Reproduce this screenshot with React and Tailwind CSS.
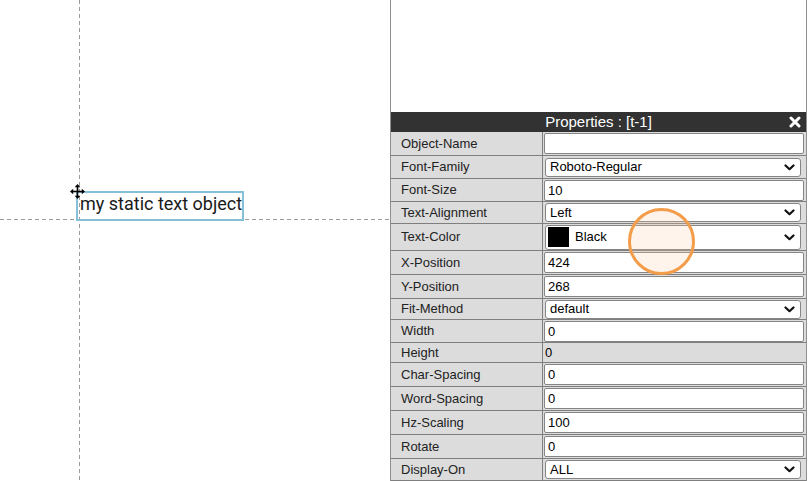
import React from "react";

const rows = [
  { label: "Object-Name", kind: "input", value: "", h: "h-[24px]" },
  { label: "Font-Family", kind: "select", value: "Roboto-Regular", h: "h-[23px]" },
  { label: "Font-Size", kind: "input", value: "10", h: "h-[23px]" },
  { label: "Text-Alignment", kind: "select", value: "Left", h: "h-[22px]" },
  { label: "Text-Color", kind: "color", value: "Black", h: "h-[27px]" },
  { label: "X-Position", kind: "input", value: "424", h: "h-[24px]" },
  { label: "Y-Position", kind: "input", value: "268", h: "h-[24px]" },
  { label: "Fit-Method", kind: "select", value: "default", h: "h-[21px]" },
  { label: "Width", kind: "input", value: "0", h: "h-[23px]" },
  { label: "Height", kind: "text", value: "0", h: "h-[20px]" },
  { label: "Char-Spacing", kind: "input", value: "0", h: "h-[24px]" },
  { label: "Word-Spacing", kind: "input", value: "0", h: "h-[24px]" },
  { label: "Hz-Scaling", kind: "input", value: "100", h: "h-[24px]" },
  { label: "Rotate", kind: "input", value: "0", h: "h-[24px]" },
  { label: "Display-On", kind: "select", value: "ALL", h: "h-[22px]" },
];

function Chevron() {
  return (
    <svg width="11" height="7" viewBox="0 0 11 7" className="shrink-0">
      <polyline
        points="1.5,1.5 5.5,5.2 9.5,1.5"
        fill="none"
        stroke="#111"
        strokeWidth="2.2"
        strokeLinecap="round"
        strokeLinejoin="round"
      />
    </svg>
  );
}

function MoveCursor() {
  return (
    <svg width="15" height="15" viewBox="0 0 15 15">
      <line x1="7.5" y1="2" x2="7.5" y2="13" stroke="#000" strokeWidth="1.6" />
      <line x1="2" y1="7.5" x2="13" y2="7.5" stroke="#000" strokeWidth="1.6" />
      <polygon points="7.5,0 10.3,3.2 4.7,3.2" fill="#000" />
      <polygon points="7.5,15 10.3,11.8 4.7,11.8" fill="#000" />
      <polygon points="0,7.5 3.2,4.7 3.2,10.3" fill="#000" />
      <polygon points="15,7.5 11.8,4.7 11.8,10.3" fill="#000" />
    </svg>
  );
}

function ValueCell({ row }) {
  if (row.kind === "input") {
    return (
      <input
        readOnly
        value={row.value}
        className="w-[260px] h-[21px] bg-white border border-[#858585] rounded-[2px] pl-[3px] text-[13px] text-black outline-none"
      />
    );
  }
  if (row.kind === "select") {
    return (
      <div className="w-[256px] h-[19px] ml-[1px] bg-white border border-[#858585] rounded-[3px] pl-[4px] pr-[5px] flex items-center justify-between text-[13px] text-black">
        <span>{row.value}</span>
        <Chevron />
      </div>
    );
  }
  if (row.kind === "color") {
    return (
      <div className="w-[256px] h-[25px] ml-[1px] bg-white border border-[#858585] rounded-[3px] pl-[2px] pr-[5px] flex items-center justify-between text-[13px] text-black">
        <div className="flex items-center gap-[6px]">
          <span className="w-[21px] h-[20px] bg-black" />
          <span>{row.value}</span>
        </div>
        <Chevron />
      </div>
    );
  }
  return <span className="pl-[1px] text-[13px] text-black">{row.value}</span>;
}

export default function App() {
  return (
    <div className="relative w-[812px] h-[481px] bg-white flex overflow-hidden font-['Liberation_Sans',Arial,sans-serif]">
      {/* canvas with guides and the selected text object */}
      <div className="relative w-[390px] h-full shrink-0">
        <div className="absolute left-[79px] top-0 bottom-0 w-px bg-[repeating-linear-gradient(to_bottom,#9c9c9c_0_4px,transparent_4px_7px)]" />
        <div className="absolute left-0 top-[219px] w-[390px] h-px bg-[repeating-linear-gradient(to_right,#9c9c9c_0_4px,transparent_4px_7px)]" />
        <div className="absolute left-[76px] top-[191px] w-[168px] h-[30px] border-2 border-[#86bfd8] pl-[2px]">
          <span className="block leading-[22px] text-[18px] text-[#1a1a1a] font-['Roboto',sans-serif] whitespace-nowrap">
            my static text object
          </span>
        </div>
        <div className="absolute left-[70px] top-[184px]">
          <MoveCursor />
        </div>
      </div>

      {/* properties panel */}
      <div className="w-[417px] h-full shrink-0 flex flex-col border-l border-r border-[#8f8f8f]">
        <div className="h-[112px] bg-white shrink-0" />
        <div className="relative h-[20px] shrink-0 bg-[#323232] flex items-center justify-center text-white text-[15px]">
          <span>Properties : [t-1]</span>
          <svg
            width="12"
            height="12"
            viewBox="0 0 12 12"
            className="absolute right-[5px] top-[4px]"
          >
            <line x1="2" y1="2" x2="10" y2="10" stroke="#fff" strokeWidth="3" strokeLinecap="round" />
            <line x1="10" y1="2" x2="2" y2="10" stroke="#fff" strokeWidth="3" strokeLinecap="round" />
          </svg>
        </div>
        {rows.map((row) => (
          <div
            key={row.label}
            className={`${row.h} shrink-0 flex bg-[#dcdcdc] border-b border-[#7f7f7f]`}
          >
            <div className="w-[152px] shrink-0 border-r border-[#7f7f7f] flex items-center pl-[10px] text-[13px] text-[#222]">
              {row.label}
            </div>
            <div className="flex-1 flex items-center pl-[1px]">
              <ValueCell row={row} />
            </div>
          </div>
        ))}
      </div>

      {/* click marker */}
      <div className="absolute left-[628px] top-[208px] w-[67px] h-[67px] rounded-full border-[3px] border-[#f39c4a] bg-[rgba(250,205,170,0.22)]" />
    </div>
  );
}
